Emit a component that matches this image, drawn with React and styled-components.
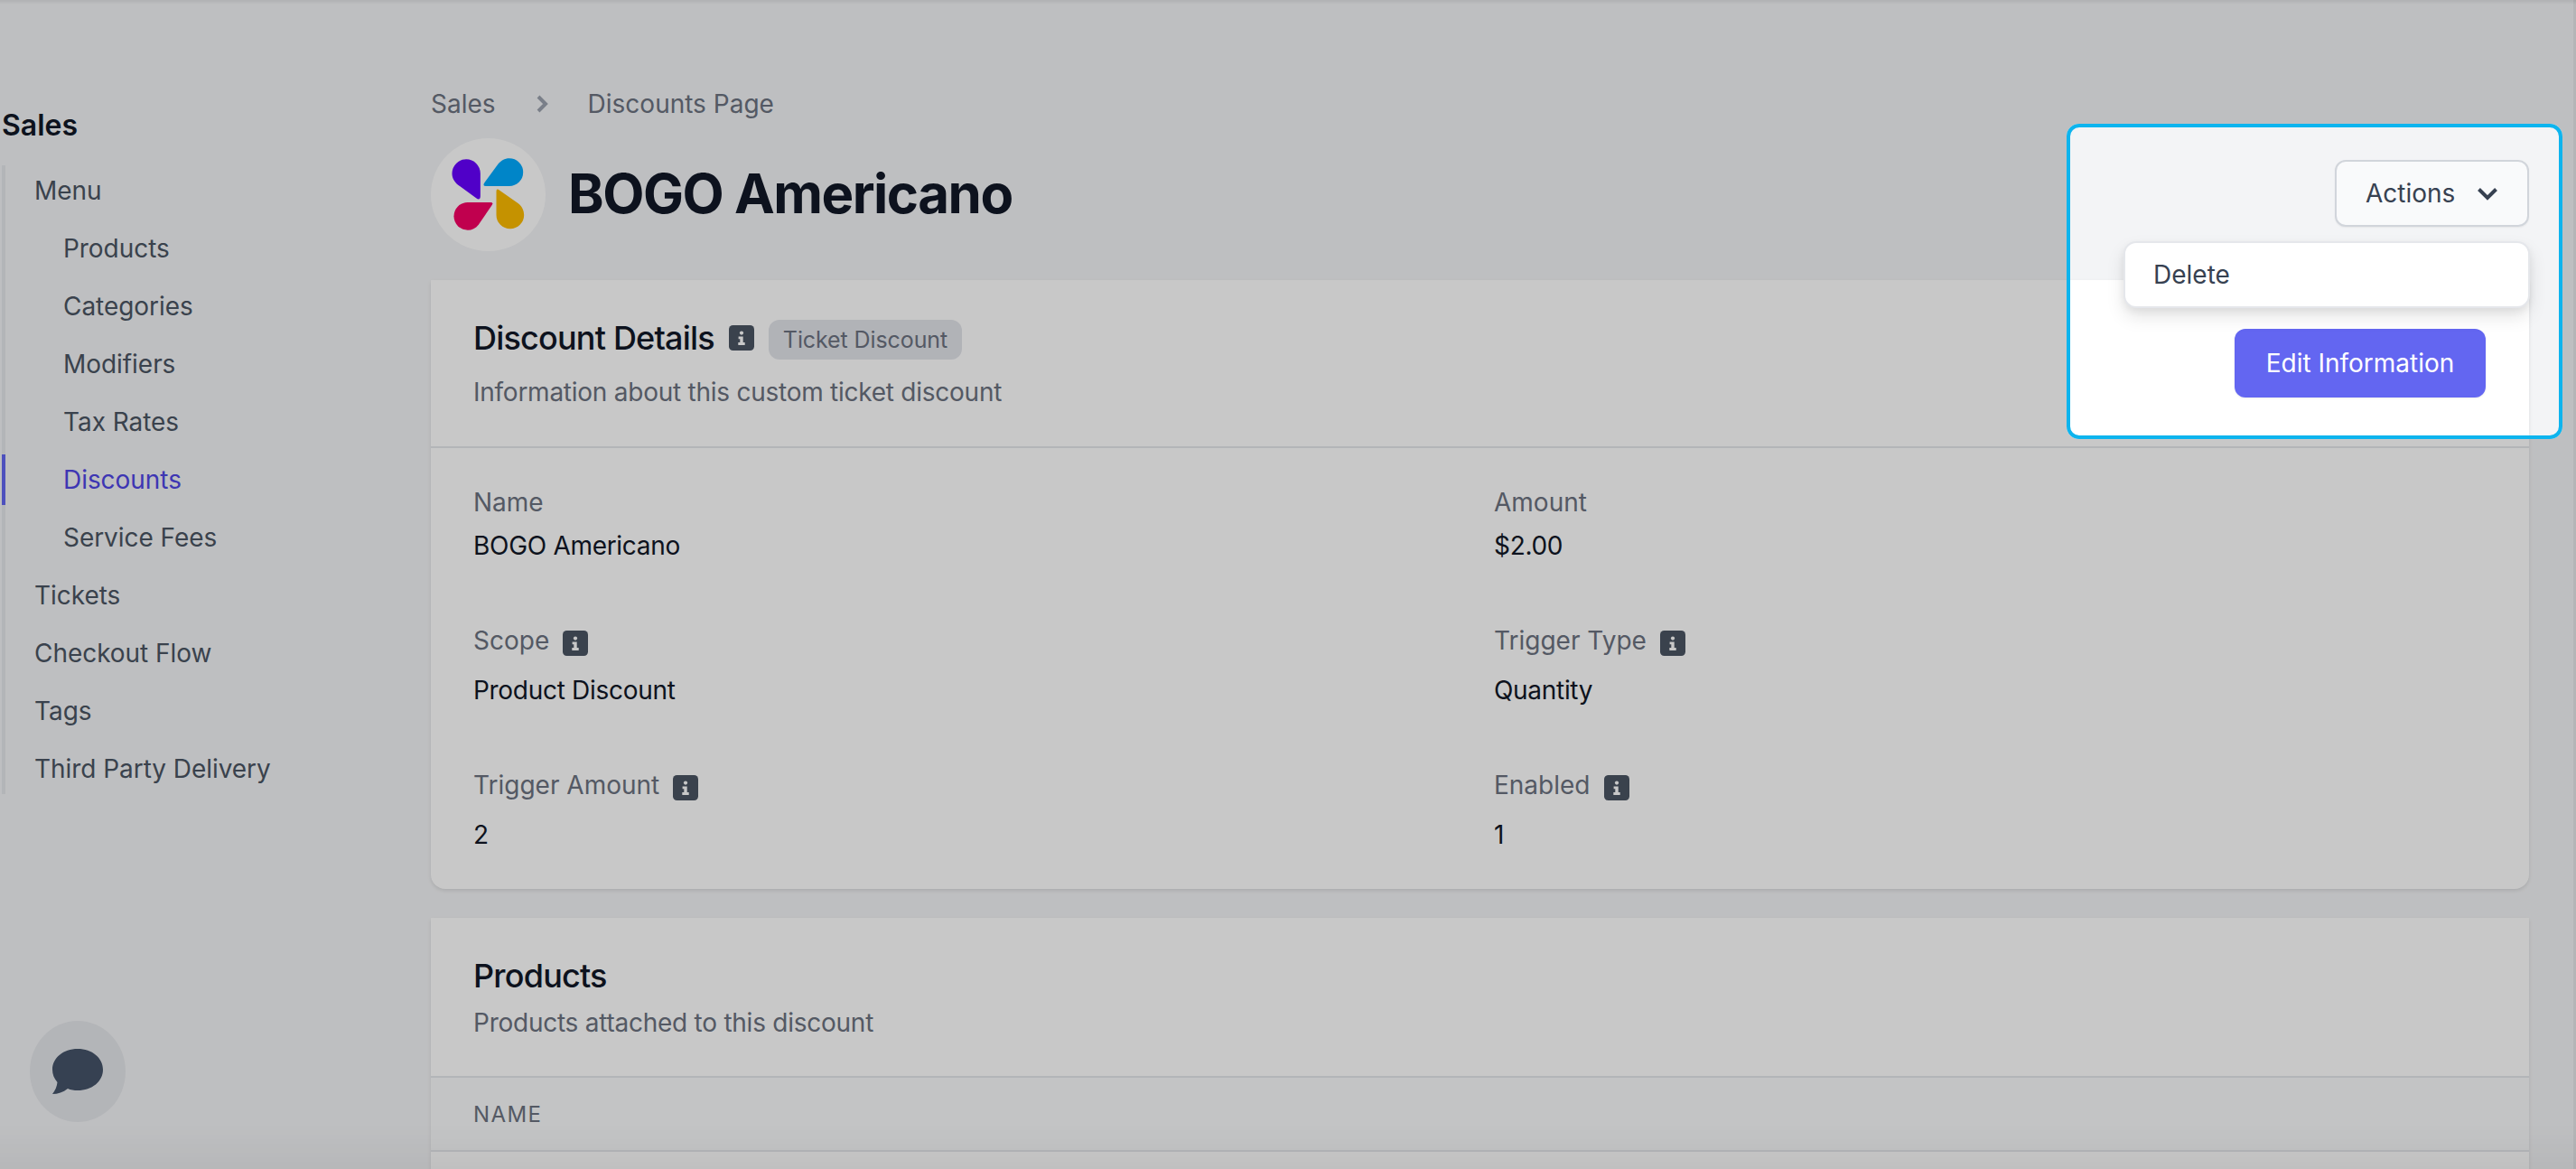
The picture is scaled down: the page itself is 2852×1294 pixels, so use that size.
import styled, { createGlobalStyle } from "styled-components";

const GlobalStyle = createGlobalStyle`
  html, body {
    margin: 0;
    padding: 0;
    background: #f3f4f6;
  }

  body {
    font-family: Inter, "Noto Sans", sans-serif;
    overflow: hidden;
  }

  * {
    box-sizing: border-box;
  }
`;

const Page = styled.div`
  position: relative;
  display: flex;
  width: 2852px;
  height: 1294px;
  overflow: hidden;
  background: #f3f4f6;
`;

const Sidebar = styled.aside`
  flex: 0 0 477px;
  padding: 119px 0 0 2px;
`;

const SidebarTitle = styled.h2`
  margin: 0 0 24px;
  font-size: 32px;
  line-height: 40px;
  font-weight: 600;
  color: #111827;
`;

const Nav = styled.nav`
  display: flex;
  flex-direction: column;
  gap: 8px;
  width: 440px;
  border-left: 4px solid #e5e7eb;
`;

const NavItem = styled.a`
  display: block;
  height: 56px;
  margin-left: -4px;
  padding-left: ${(p) => (p.$sub ? 64 : 32)}px;
  border-left: 4px solid ${(p) => (p.$active ? "#6366f1" : "transparent")};
  font-size: 28px;
  line-height: 56px;
  letter-spacing: -0.05px;
  color: ${(p) => (p.$active ? "#4f46e5" : "#4b5563")};
`;

const Main = styled.main`
  flex: 1;
  min-width: 0;
  padding: 95px 52px 0 0;
`;

const Breadcrumbs = styled.div`
  display: flex;
  align-items: center;
  gap: 44px;
  height: 40px;
  font-size: 28px;
  color: #6b7280;
`;

const PageHeader = styled.header`
  display: flex;
  align-items: center;
  justify-content: space-between;
  margin: 18px 0 32px;
`;

const TitleGroup = styled.div`
  display: flex;
  align-items: center;
  gap: 25px;
`;

const LogoCircle = styled.div`
  display: flex;
  align-items: center;
  justify-content: center;
  width: 127px;
  height: 125px;
  border-radius: 50%;
  background: #fff;
`;

const PageTitle = styled.h1`
  margin: 0 0 3px;
  font-size: 60px;
  line-height: 72px;
  font-weight: 700;
  letter-spacing: -1.5px;
  color: #111827;
`;

const ActionsWrap = styled.div`
  position: relative;
  z-index: 2;
  margin-bottom: 3px;
`;

const ActionsButton = styled.button`
  display: flex;
  align-items: center;
  justify-content: space-between;
  width: 215px;
  height: 74px;
  padding: 0 32px;
  border: 2px solid #d1d5db;
  border-radius: 12px;
  background: #f9fafb;
  box-shadow: 0 1px 2px rgba(0, 0, 0, 0.06);
  font-family: inherit;
  font-size: 28px;
  font-weight: 400;
  color: #374151;
`;

const Dropdown = styled.div`
  position: absolute;
  top: 90px;
  right: -1px;
  width: 450px;
  height: 74px;
  padding: 0 31px;
  border: 2px solid #e5e7eb;
  border-radius: 14px;
  background: #fff;
  box-shadow: 0 10px 20px rgba(0, 0, 0, 0.1), 0 4px 8px rgba(0, 0, 0, 0.06);
  font-size: 28px;
  line-height: 70px;
  color: #374151;
`;

const Card = styled.section`
  margin-bottom: 32px;
  background: #fff;
  border-radius: 0 0 16px 16px;
  box-shadow: 0 2px 4px rgba(0, 0, 0, 0.1);
`;

const CardHeader = styled.div`
  display: flex;
  align-items: center;
  justify-content: space-between;
  padding: 40px 48px ${(p) => (p.$short ? 39 : 40)}px 47px;
  border-bottom: 2px solid #e5e7eb;
`;

const TitleRow = styled.div`
  display: flex;
  align-items: center;
  gap: 16px;
  height: 48px;
  margin-bottom: ${(p) => (p.$tight ? 8 : 16)}px;
`;

const CardTitle = styled.h3`
  margin: 0;
  font-size: 36px;
  line-height: 48px;
  font-weight: 500;
  letter-spacing: -0.8px;
  color: #111827;
`;

const Badge = styled.span`
  display: inline-flex;
  align-items: center;
  height: 44px;
  margin-top: 4px;
  padding: 0 16px;
  border-radius: 12px;
  background: #e2e4ea;
  font-size: 25px;
  font-weight: 400;
  letter-spacing: -0.1px;
  color: #6b7280;
`;

const CardSubtitle = styled.p`
  margin: 0;
  font-size: 28px;
  line-height: 40px;
  letter-spacing: -0.25px;
  color: #6b7280;
`;

const EditButton = styled.button`
  width: 278px;
  height: 76px;
  border: 0;
  border-radius: 12px;
  background: #6366f1;
  box-shadow: 0 1px 2px rgba(0, 0, 0, 0.08);
  font-family: inherit;
  font-size: 28px;
  font-weight: 400;
  color: #fff;
`;

const DetailGrid = styled.dl`
  display: grid;
  grid-template-columns: 1fr 1fr;
  gap: 64px 32px;
  margin: 0;
  padding: 40px 48px 40px 47px;
`;

const Detail = styled.div`
  min-width: 0;
`;

const Label = styled.dt`
  display: flex;
  align-items: flex-start;
  gap: 15px;
  height: ${(p) => (p.$withInfo ? 48 : 40)}px;
  padding-top: ${(p) => (p.$withInfo ? 1 : 0)}px;
  font-size: 28px;
  line-height: 40px;
  color: #6b7280;
`;

const Value = styled.dd`
  margin: 8px 0 0;
  font-size: 28px;
  line-height: 40px;
  letter-spacing: -0.3px;
  color: #111827;
`;

const InfoBox = styled.svg`
  flex: none;
  width: 28px;
  height: 28px;
  margin-top: ${(p) => (p.$inLabel ? 9 : 0)}px;
`;

const TableHead = styled.div`
  height: 82px;
  padding: 0 47px;
  border-bottom: 2px solid #e5e7eb;
  background: #f9fafb;
  font-size: 24px;
  line-height: 82px;
  font-weight: 400;
  letter-spacing: 1.4px;
  text-transform: uppercase;
  color: #6b7280;
`;

const TableBody = styled.div`
  height: 120px;
`;

const ChatBubble = styled.div`
  position: absolute;
  left: 33px;
  top: 1130px;
  display: flex;
  align-items: center;
  justify-content: center;
  width: 106px;
  height: 112px;
  border-radius: 50%;
  background: #e5e7eb;
`;

/* darkened page with a cut-out round the actions area */
const Spotlight = styled.div`
  position: absolute;
  left: 2288px;
  top: 137px;
  z-index: 5;
  width: 549px;
  height: 349px;
  border: 4px solid #0db4ee;
  border-radius: 14px;
  box-shadow: 0 0 0 4000px rgba(0, 0, 0, 0.216);
  pointer-events: none;
`;

/* soft shading the screen capture has at its edges */
const ScreenEdge = styled.div`
  position: absolute;
  inset: 0;
  z-index: 6;
  border-right: 3px solid rgba(0, 0, 0, 0.05);
  background:
    linear-gradient(to bottom, rgba(0, 0, 0, 0.07), rgba(0, 0, 0, 0) 5px),
    linear-gradient(to top, rgba(0, 0, 0, 0.04), rgba(0, 0, 0, 0) 50px);
  pointer-events: none;
`;

const InfoIcon = ({ inLabel }) => (
  <InfoBox $inLabel={inLabel} viewBox="0 0 28 28">
    <rect width="28" height="28" rx="4.5" fill="#4b5563" />
    <circle cx="14" cy="8.6" r="2.1" fill="#fff" />
    <path
      d="M10.6 12.4h5.1v6.7h2v2.9h-7.4v-2.9h2v-3.9h-1.7z"
      fill="#fff"
    />
  </InfoBox>
);

const Logo = () => (
  <svg width="87" height="85" viewBox="110 95 260 255">
    <path
      d="M214 152 L214 228 Q213 244 200 234 L140 190 C128 180 120 168 120 152 A47 47 0 0 1 214 152 Z"
      fill="#6600ff"
    />
    <path
      d="M232 194 Q220 194 228 182 L272 122 C282 110 295 102 310 102 A46 46 0 0 1 310 194 Z"
      fill="#00aaff"
    />
    <path
      d="M267 290 L267 212 Q267 200 278 208 L338 250 C352 260 359 275 359 290 A46 46 0 0 1 267 290 Z"
      fill="#fbbb00"
    />
    <path
      d="M172 248 L248 248 Q258 248 252 258 L208 322 C198 334 186 340 172 340 A46 46 0 0 1 172 248 Z"
      fill="#f50064"
    />
  </svg>
);

const menu = [
  { label: "Menu" },
  { label: "Products", sub: true },
  { label: "Categories", sub: true },
  { label: "Modifiers", sub: true },
  { label: "Tax Rates", sub: true },
  { label: "Discounts", sub: true, active: true },
  { label: "Service Fees", sub: true },
  { label: "Tickets" },
  { label: "Checkout Flow" },
  { label: "Tags" },
  { label: "Third Party Delivery" },
];

const details = [
  { label: "Name", value: "BOGO Americano" },
  { label: "Amount", value: "$2.00" },
  { label: "Scope", value: "Product Discount", info: true },
  { label: "Trigger Type", value: "Quantity", info: true },
  { label: "Trigger Amount", value: "2", info: true },
  { label: "Enabled", value: "1", info: true },
];

export default function App() {
  return (
    <Page>
      <GlobalStyle />
      <Sidebar>
        <SidebarTitle>Sales</SidebarTitle>
        <Nav>
          {menu.map((item) => (
            <NavItem key={item.label} $sub={item.sub} $active={item.active}>
              {item.label}
            </NavItem>
          ))}
        </Nav>
      </Sidebar>

      <Main>
        <Breadcrumbs>
          <span>Sales</span>
          <svg width="14" height="20" viewBox="0 0 14 20" fill="none">
            <path d="M3 2 L11 10 L3 18" stroke="#9ca3af" strokeWidth="4" />
          </svg>
          <span>Discounts Page</span>
        </Breadcrumbs>

        <PageHeader>
          <TitleGroup>
            <LogoCircle>
              <Logo />
            </LogoCircle>
            <PageTitle>BOGO Americano</PageTitle>
          </TitleGroup>
          <ActionsWrap>
            <ActionsButton>
              Actions
              <svg width="24" height="15" viewBox="0 0 24 15" fill="none">
                <path d="M2.5 2.5 L12 12 L21.5 2.5" stroke="#374151" strokeWidth="4" />
              </svg>
            </ActionsButton>
            <Dropdown>Delete</Dropdown>
          </ActionsWrap>
        </PageHeader>

        <Card>
          <CardHeader>
            <div>
              <TitleRow>
                <CardTitle>Discount Details</CardTitle>
                <InfoIcon />
                <Badge>Ticket Discount</Badge>
              </TitleRow>
              <CardSubtitle>Information about this custom ticket discount</CardSubtitle>
            </div>
            <EditButton>Edit Information</EditButton>
          </CardHeader>
          <DetailGrid>
            {details.map((d) => (
              <Detail key={d.label}>
                <Label $withInfo={d.info}>
                  {d.label}
                  {d.info && <InfoIcon inLabel />}
                </Label>
                <Value>{d.value}</Value>
              </Detail>
            ))}
          </DetailGrid>
        </Card>

        <Card>
          <CardHeader $short>
            <div>
              <TitleRow $tight>
                <CardTitle>Products</CardTitle>
              </TitleRow>
              <CardSubtitle>Products attached to this discount</CardSubtitle>
            </div>
          </CardHeader>
          <TableHead>Name</TableHead>
          <TableBody />
        </Card>
      </Main>

      <ChatBubble>
        <svg width="58" height="52" viewBox="0 0 58 52">
          <path
            d="M29 1 C45 1 57 11 57 24 C57 37 45 47 29 47 C25 47 21 46.5 18 45 C13 49 7 51 1 51 C4 47 6 43 6.5 38 C3 34 1 29 1 24 C1 11 13 1 29 1 Z"
            fill="#455469"
          />
        </svg>
      </ChatBubble>

      <Spotlight />
      <ScreenEdge />
    </Page>
  );
}
